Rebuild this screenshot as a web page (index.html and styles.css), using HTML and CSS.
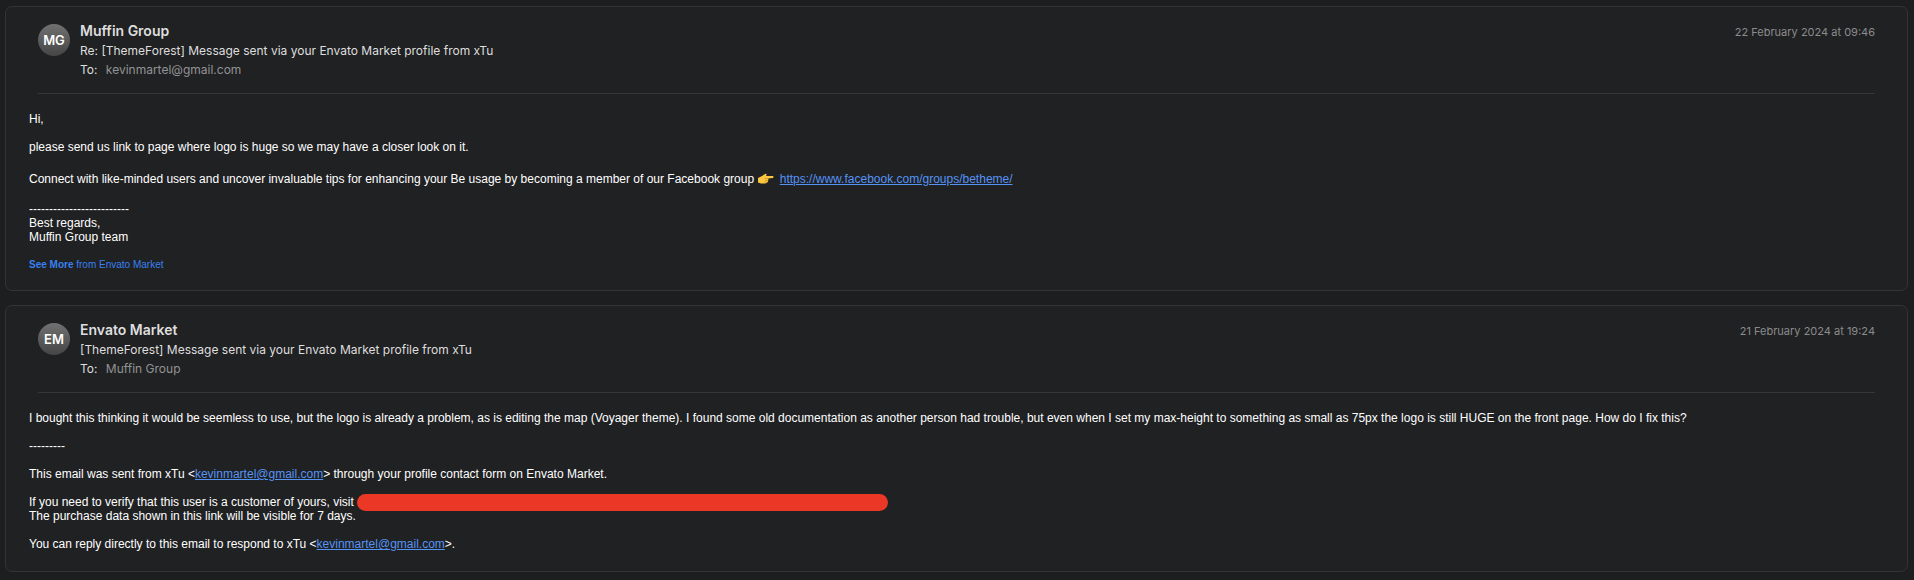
FILE: index.html
```
<!DOCTYPE html>
<html lang="en">
<head>
  <meta charset="UTF-8" />
  <meta name="viewport" content="width=device-width, initial-scale=1" />
  <title>Messages</title>
  <link rel="stylesheet" href="styles.css">
</head>
<body>
  <main class="thread">

    <article class="message">
      <header class="message-header">
        <div class="avatar">MG</div>
        <div class="details">
          <h2>Muffin Group</h2>
          <p>Re: [ThemeForest] Message sent via your Envato Market profile from xTu</p>
          <p>To: <span class="recipient">kevinmartel@gmail.com</span></p>
        </div>
        <time datetime="2024-02-22T09:46">22 February 2024 at 09:46</time>
      </header>
      <div class="message-body">
        <p>Hi,</p>
        <p>please send us link to page where logo is huge so we may have a closer look on it.</p>
        <p class="promo">Connect with like-minded users and uncover invaluable tips for enhancing your Be usage by becoming a member of our Facebook group
          <svg class="hand" viewBox="0 0 16 12" aria-hidden="true">
            <path d="M0 5 L4 3 L7 1 Q9 0 8.500 2 L8 3 L15 3 Q16 4 15 5 L10 5.500 Q11 6.500 10 7.500 Q10.500 9 9 9.500 Q8.500 10.500 7 10.500 L3 10.500 L0 9.500 Z" fill="#fbc740" />
            <path d="M6.500 5.500 H10 M7 7.500 H10 M6.500 9.300 H9" stroke="#cf8d20" stroke-width="0.700" fill="none" />
          </svg>
          <a href="https://www.facebook.com/groups/betheme/">https://www.facebook.com/groups/betheme/</a></p>
        <p>-------------------------<br>Best regards,<br>Muffin Group team</p>
        <a class="see-more" href="#"><b>See More</b> from Envato Market</a>
      </div>
    </article>

    <article class="message">
      <header class="message-header">
        <div class="avatar">EM</div>
        <div class="details">
          <h2>Envato Market</h2>
          <p>[ThemeForest] Message sent via your Envato Market profile from xTu</p>
          <p>To: <span class="recipient">Muffin Group</span></p>
        </div>
        <time datetime="2024-02-21T19:24">21 February 2024 at 19:24</time>
      </header>
      <div class="message-body">
        <p>I bought this thinking it would be seemless to use, but the logo is already a problem, as is editing the map (Voyager theme). I found some old documentation as another person had trouble, but even when I set my max-height to something as small as 75px the logo is still HUGE on the front page. How do I fix this?</p>
        <p>---------</p>
        <p>This email was sent from xTu &lt;<a href="mailto:kevinmartel@gmail.com">kevinmartel@gmail.com</a>&gt; through your profile contact form on Envato Market.</p>
        <p>If you need to verify that this user is a customer of yours, visit <span class="redacted"></span><br>The purchase data shown in this link will be visible for 7 days.</p>
        <p>You can reply directly to this email to respond to xTu &lt;<a href="mailto:kevinmartel@gmail.com">kevinmartel@gmail.com</a>&gt;.</p>
      </div>
    </article>

  </main>
</body>
</html>
```
FILE: styles.css
```
* {
  margin: 0;
  padding: 0;
  box-sizing: border-box;
}
body {
  background: #1d1e20;
  color: #fff;
  font-family: "Liberation Sans", Arial, sans-serif;
}

.thread {
  display: flex;
  flex-direction: column;
  gap: 14px;
  padding: 6px 6px 8px 5px;
}
.message {
  padding: 0 32px 20px 23px;
  background: #202123;
  border: 1px solid #333436;
  border-radius: 7px;
}
.message:first-child {
  padding-bottom: 18px;
}

.message-header {
  display: flex;
  align-items: flex-start;
  margin-left: 9px;
  padding: 13px 0 14px;
  border-bottom: 1px solid #363739;
  font-family: Inter, sans-serif;
  font-size: 12px;
}
.avatar {
  width: 32px;
  height: 32px;
  margin: 4px 10px 0 0;
  border-radius: 50%;
  background: linear-gradient(#717171, #454545);
  font-size: 13px;
  font-weight: 600;
  line-height: 33px;
  text-align: center;
}
.details {
  flex: 1;
  color: #dedede;
  line-height: 19px;
}
.details h2 {
  font-size: 14px;
  font-weight: 600;
  line-height: 21px;
}
.recipient {
  margin-left: 5px;
  color: #929394;
}
time {
  color: #8b8c8d;
  font-size: 11px;
  line-height: 25px;
}

.message-body {
  display: flex;
  flex-direction: column;
  align-items: flex-start;
  gap: 14px;
  padding-top: 18px;
  font-size: 12px;
  line-height: 14px;
}
.message-body a {
  color: #5593f5;
}
.promo {
  padding: 4px 0 2px;
}
.hand {
  width: 16px;
  height: 12px;
  margin: 0 2px 0 1px;
  vertical-align: -2px;
}
.message-body .see-more {
  color: #3880ef;
  font-size: 10px;
  text-decoration: none;
}
.redacted {
  display: inline-block;
  width: 531px;
  max-width: 100%;
  height: 17px;
  margin: -2px 0;
  border-radius: 9px;
  background: #eb3826;
  vertical-align: middle;
}
```
